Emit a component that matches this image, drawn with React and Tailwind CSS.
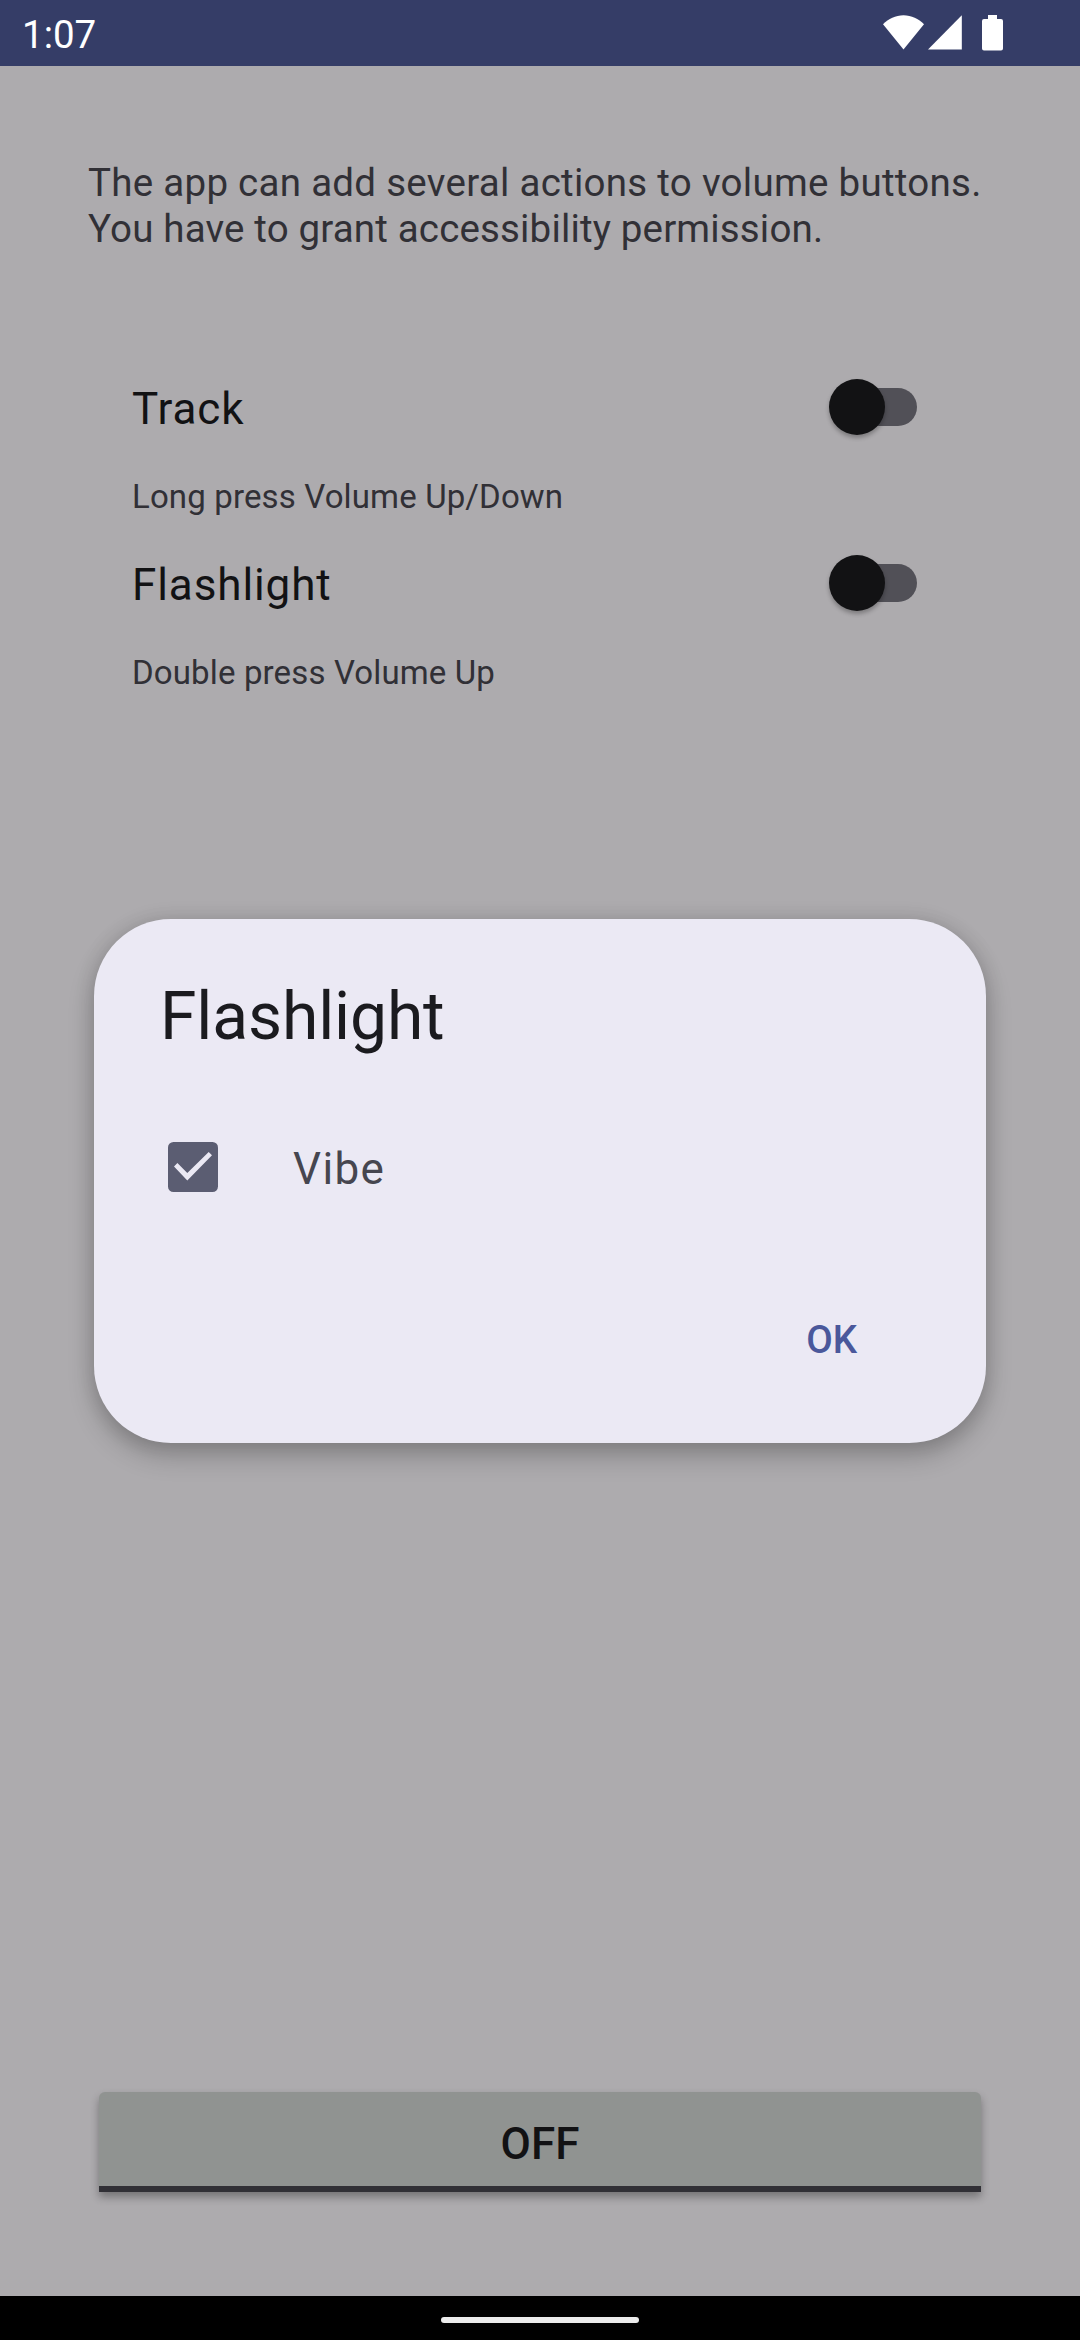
const actions = [
  { title: "Track", hint: "Long press Volume Up/Down" },
  { title: "Flashlight", hint: "Double press Volume Up" },
];

function StatusBar() {
  return (
    <header className="flex h-[66px] shrink-0 items-start justify-between bg-[#353d67] pl-[22px] pr-[77px] text-white">
      <span className="mt-3 text-[38.5px] leading-[46px]">1:07</span>
      <div className="mt-[15px] flex items-start">
        <svg className="h-[35px] w-[41px]" viewBox="0 0 41 35" fill="currentColor">
          <path d="M20.5 34.5 0 9.3C5.5 3.7 12.5 .2 20.5 .2S35.5 3.7 41 9.3Z" />
        </svg>
        <svg className="ml-[4px] h-[35px] w-[34px]" viewBox="0 0 34 35" fill="currentColor">
          <path d="M33.8 .3V34.5H0Z" />
        </svg>
        <svg className="ml-[20px] h-[36px] w-[21px]" viewBox="0 0 21 36" fill="currentColor">
          <path d="M6 0h9v4h4a2 2 0 0 1 2 2v27.5a2 2 0 0 1-2 2H2a2 2 0 0 1-2-2V6a2 2 0 0 1 2-2h4Z" />
        </svg>
      </div>
    </header>
  );
}

function Switch() {
  return (
    <div className="flex h-[56px] w-[88px] items-center">
      <div className="z-10 h-[56px] w-[56px] shrink-0 rounded-full bg-[#121214] shadow-[0_3px_4px_rgba(0,0,0,0.28)]" />
      <div className="-ml-[42px] h-[38px] w-[74px] shrink-0 rounded-full bg-[#515057]" />
    </div>
  );
}

function ActionRow({ title, hint }) {
  return (
    <section className="flex h-[176px] flex-col pl-[132px] pr-[163px]">
      <div className="flex h-[60px] items-start justify-between">
        <h2 className="mt-1 text-[44px] leading-[52px] tracking-[0.9px] text-[#121214]">{title}</h2>
        <Switch />
      </div>
      <p className="mt-[38px] text-[33px] leading-[40px] tracking-[0.14px]">{hint}</p>
    </section>
  );
}

function Dialog() {
  return (
    <div className="absolute left-[94px] top-[919px] flex h-[524px] w-[892px] flex-col rounded-[77px] bg-[#ebe9f4] px-[66px] pt-[59px] shadow-[0_13px_26px_rgba(0,0,0,0.22),0_0_20px_rgba(0,0,0,0.12)]">
      <h1 className="text-[66px] leading-[78px] tracking-[-0.14px] text-[#1b1b1f]">Flashlight</h1>
      <label className="mt-[86px] flex items-start pl-2">
        <svg className="h-[50px] w-[50px]" viewBox="0 0 50 50">
          <rect width="50" height="50" rx="5.5" fill="#5b5d72" />
          <path d="M6 24.6 9.4 21.1 19.3 31 40.7 9.9 44 13.3 19.3 38.5Z" fill="#ebe9f4" />
        </svg>
        <span className="ml-[75px] mt-px text-[44px] leading-[52px] tracking-[0.03125em] text-[#46464f]">Vibe</span>
      </label>
      <button className="mr-[63px] mt-[122px] self-end text-[38.5px] font-medium leading-[46px] text-[#4a589b]">OK</button>
    </div>
  );
}

export default function App() {
  return (
    <div className="relative flex h-[2340px] w-[1080px] flex-col overflow-hidden bg-[#adabae] font-['Roboto',sans-serif] text-[#313036]">
      <StatusBar />
      <main className="flex flex-1 flex-col">
        <p className="ml-[88px] mt-[94px] whitespace-nowrap text-[38.5px] leading-[46px]">
          <span className="tracking-[0.28px]">The app can add several actions to volume buttons.</span>
          <br />
          <span className="tracking-[0.16px]">You have to grant accessibility permission.</span>
        </p>
        <div className="mt-[127px] flex flex-col">
          {actions.map((action) => (
            <ActionRow key={action.title} {...action} />
          ))}
        </div>
        <button className="mx-auto mb-[104px] mt-auto flex h-[100px] w-[882px] flex-col rounded-t-[6px] bg-[#909391] text-[44px] font-medium leading-[52px] text-[#121214] shadow-[0_5px_8px_rgba(0,0,0,0.32)]">
          <span className="mt-[26px] h-[68px] self-center">OFF</span>
          <span className="h-[6px] w-full bg-[#313036]" />
        </button>
      </main>
      <footer className="flex h-[44px] shrink-0 justify-center bg-black pt-[21px]">
        <div className="h-[6px] w-[198px] rounded-full bg-[#ececec]" />
      </footer>
      <Dialog />
    </div>
  );
}
